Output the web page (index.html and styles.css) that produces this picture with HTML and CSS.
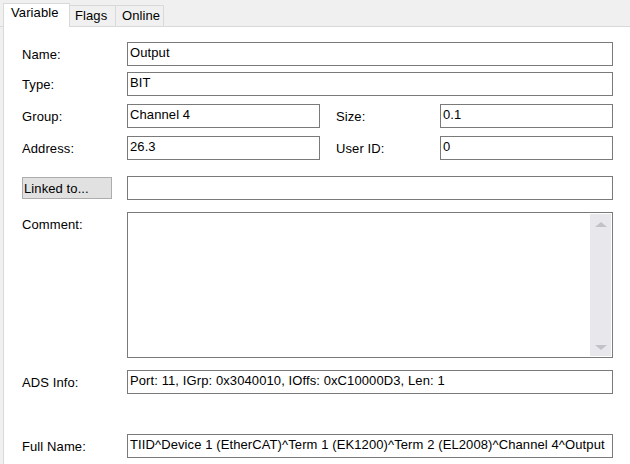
FILE: index.html
```html
<!DOCTYPE html>
<html lang="en">
<head>
    <meta charset="UTF-8">
    <title>Variable</title>
    <link rel="stylesheet" href="styles.css">
</head>
<body>
    <div class="tabs">
        <div class="tab active">Variable</div>
        <div class="tab tab-flags">Flags</div>
        <div class="tab tab-online">Online</div>
    </div>

    <div class="panel">
        <div class="row row-name">
            <div class="label">Name:</div>
            <div class="field">Output</div>
        </div>
        <div class="row row-type">
            <div class="label">Type:</div>
            <div class="field">BIT</div>
        </div>
        <div class="row row-group">
            <div class="label">Group:</div>
            <div class="field short">Channel 4</div>
            <div class="label label-right">Size:</div>
            <div class="field">0.1</div>
        </div>
        <div class="row row-address">
            <div class="label">Address:</div>
            <div class="field short">26.3</div>
            <div class="label label-right">User ID:</div>
            <div class="field">0</div>
        </div>
        <div class="row row-linked">
            <div class="label-cell">
                <button class="linked-btn">Linked to...</button>
            </div>
            <div class="field"></div>
        </div>
        <div class="row row-comment">
            <div class="label">Comment:</div>
            <div class="memo">
                <div class="memo-text"></div>
                <div class="scrollbar">
                    <span class="arrow arrow-up"></span>
                    <span class="arrow arrow-down"></span>
                </div>
            </div>
        </div>
        <div class="row row-ads">
            <div class="label">ADS Info:</div>
            <div class="field">Port: 11, IGrp: 0x3040010, IOffs: 0xC10000D3, Len: 1</div>
        </div>
        <div class="row row-full">
            <div class="label">Full Name:</div>
            <div class="field">TIID^Device 1 (EtherCAT)^Term 1 (EK1200)^Term 2 (EL2008)^Channel 4^Output</div>
        </div>
    </div>
</body>
</html>
```

FILE: styles.css
```css
html, body {
    margin: 0;
    height: 100%;
}
body {
    font-family: "Liberation Sans", Arial, sans-serif;
    font-size: 13px;
    letter-spacing: 0.1px;
    color: #000;
    background-color: #f0f0f0;
    overflow: hidden;
}

/* tab strip */
.tabs {
    display: flex;
    align-items: flex-end;
    height: 26px;
    padding-left: 3px;
    border-bottom: 1px solid #d9d9d9;
}
.tab {
    height: 21px;
    line-height: 20px;
    box-sizing: border-box;
    border: 1px solid #d9d9d9;
    border-left: none;
    border-bottom: none;
    background-color: #f0f0f0;
}
.tab.active {
    width: 67px;
    height: 24px;
    line-height: 18px;
    padding-left: 7px;
    margin-bottom: -1px;
    border-left: 1px solid #d9d9d9;
    background-color: #fff;
    position: relative;
    z-index: 1;
}
.tab-flags {
    width: 46px;
    padding-left: 5px;
}
.tab-online {
    width: 48px;
    padding-left: 6px;
}

/* panel */
.panel {
    margin-left: 3px;
    border-left: 1px solid #d9d9d9;
    background-color: #fff;
    height: calc(100% - 27px);
    padding: 15px 17px 0 18px;
    box-sizing: border-box;
}
.row {
    display: flex;
    align-items: flex-start;
}
.row-type { margin-top: 6px; }
.row-group { margin-top: 8px; }
.row-address { margin-top: 8px; }
.row-linked { margin-top: 16px; }
.row-comment { margin-top: 12px; }
.row-ads { margin-top: 12px; }
.row-full { margin-top: 40px; }

.label, .label-cell {
    width: 105px;
    flex: none;
}
.label {
    line-height: 15px;
    padding-top: 5px;
}
.label-right {
    width: 104px;
    margin-left: 16px;
}
.field {
    flex: 1;
    height: 24px;
    box-sizing: border-box;
    border: 1px solid #7a7a7a;
    padding: 2px 2px 0;
    line-height: 15px;
    white-space: nowrap;
    overflow: hidden;
}
.field.short {
    flex: none;
    width: 193px;
}

.linked-btn {
    display: block;
    width: 90px;
    height: 22px;
    margin-top: 1px;
    padding: 0 1px;
    text-align: left;
    font: inherit;
    letter-spacing: inherit;
    color: #000;
    background-color: #e1e1e1;
    border: 1px solid #adadad;
    border-radius: 0;
}

/* comment memo */
.memo {
    flex: 1;
    display: flex;
    height: 146px;
    box-sizing: border-box;
    border: 1px solid #7a7a7a;
    padding: 1px 1px 1px 0;
}
.memo-text {
    flex: 1;
}
.scrollbar {
    width: 21px;
    background-color: #e8e8ec;
    display: flex;
    flex-direction: column;
    justify-content: space-between;
    align-items: center;
    padding: 8px 0 6px;
}
.arrow {
    width: 0;
    height: 0;
    border-left: 6px solid transparent;
    border-right: 6px solid transparent;
}
.arrow-up {
    border-bottom: 5px solid #c2c3c9;
}
.arrow-down {
    border-top: 5px solid #c2c3c9;
}
```
